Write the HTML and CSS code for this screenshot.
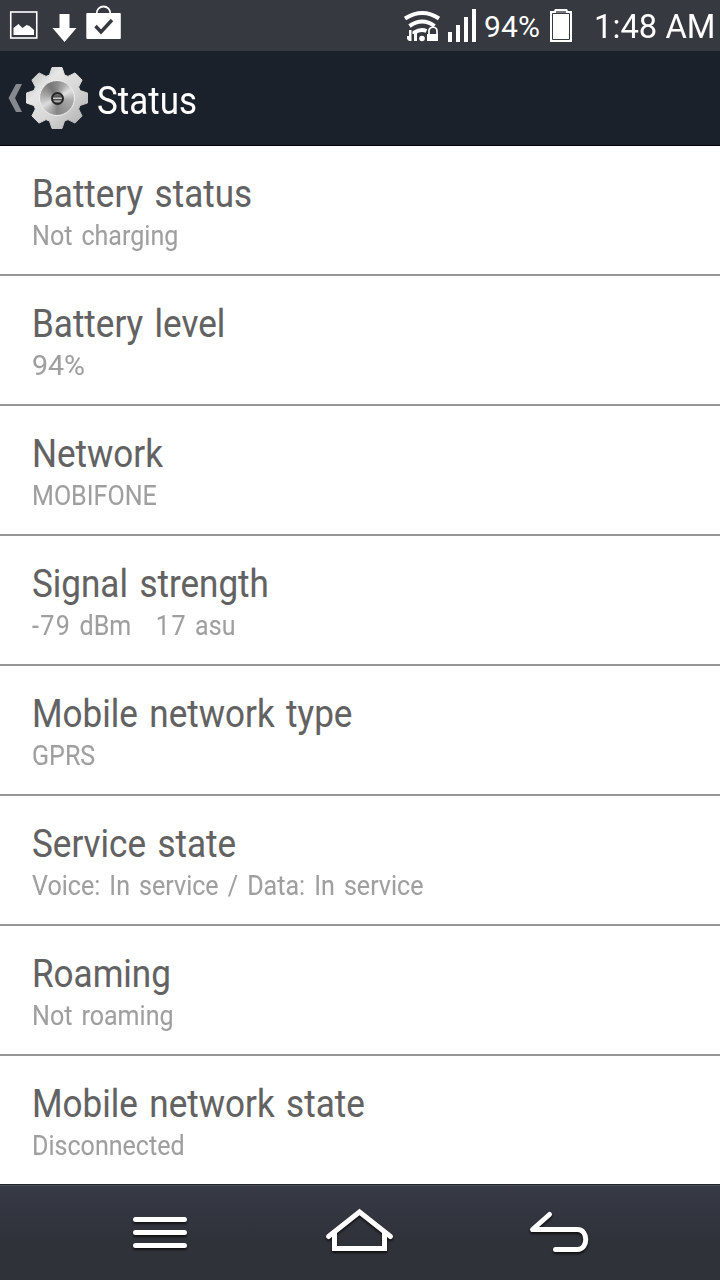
FILE: index.html
```html
<!DOCTYPE html>
<html lang="en">
<head>
    <meta charset="UTF-8">
    <meta name="viewport" content="width=device-width, initial-scale=1.0">
    <title>Status</title>
    <link rel="stylesheet" href="styles.css">
</head>
<body>
    <div class="statusbar">
        <svg class="notifications" width="122" height="51" viewBox="0 0 122 51">
            <rect x="10.75" y="12" width="26" height="26" fill="none" stroke="#fff" stroke-width="1.6"/>
            <path d="M13.500 35v-7l5-4 4 4 4-3 3 1 4.500 4v5z" fill="#fff"/>
            <path d="M59.500 14h10v14h7L64.500 42 52.500 28h7z" fill="#fff"/>
            <path d="M96.500 14c0-10 14-10 14 0" fill="none" stroke="#fff" stroke-width="1.800"/>
            <rect x="86.300" y="13" width="34.500" height="26" rx="1" fill="#fff"/>
            <path d="M95.500 26l5.500 6 11-12" fill="none" stroke="#373940" stroke-width="3.400"/>
        </svg>
        <div class="indicators">
            <svg width="73" height="51" viewBox="404 0 73 51">
                <g fill="none" stroke="#fff" stroke-width="4">
                    <path d="M405 18.500q17.500-11 34 0"/>
                    <path d="M409.500 26q13-9 25 0"/>
                    <path d="M414.500 34v-1.500q6-4 12-1.500" stroke-width="4"/>
                </g>
                <path d="M409 30h2.500v11h-2.500l-2-2v-3h2zM414 31h3v10h-3z" fill="#fff"/>
                <circle cx="422" cy="38.500" r="2.800" fill="#fff"/>
                <path d="M429 34v-3c0-5 8-5 8 0v3" fill="none" stroke="#fff" stroke-width="1.700"/>
                <path d="M427 34h11v7h-11zM448 32h4v10h-4zM456 25h4v17h-4zM464 17h4v25h-4zM472 9h4v33h-4z" fill="#fff"/>
            </svg>
            <span class="percent">94%</span>
            <svg width="22" height="51" viewBox="550 0 22 51">
                <path d="M550 11h4l1-2h12l1 2h4v31h-22z" fill="#fff"/>
                <path d="M552.500 13.500h17v26h-17z" fill="none" stroke="#373940"/>
                <path d="M556 11h10v2h-10z" fill="#777a80"/>
            </svg>
            <span class="clock">1:48 AM</span>
        </div>
    </div>

    <div class="header">
        <svg class="back" width="18" height="94" viewBox="8 51 18 94">
            <path d="M16 84h6l-7 14 7 14h-6l-7.500-14z" fill="#85888e"/>
        </svg>
        <div class="gear">
            <svg width="62" height="62" viewBox="0 0 62 62">
                <defs>
                    <linearGradient id="metal" x1="0" y1="0" x2="1" y2="1">
                        <stop offset="0" stop-color="#b5b5b5"/>
                        <stop offset=".3" stop-color="#e6e6e6"/>
                        <stop offset=".6" stop-color="#d5d5d5"/>
                        <stop offset="1" stop-color="#aaa"/>
                    </linearGradient>
                </defs>
                <path fill="url(#metal)" stroke="url(#metal)" stroke-linejoin="round" d="M23.500 8 26 .5h10L38.500 8 42 9.400l7-3.500 7.100 7.100-3.500 7 1.400 3.500 7.500 2.500v10L54 38.500 52.600 42l3.500 7-7.100 7.100-7-3.500-3.500 1.400-2.500 7.500H26L23.500 54 20 52.600l-7 3.500L5.900 49l3.500-7L8 38.500.5 36V26L8 23.500 9.400 20l-3.500-7L13 5.900l7 3.500z"/>
            </svg>
            <div class="disc"></div>
            <div class="hub"></div>
        </div>
        <h1>Status</h1>
    </div>

    <div class="list">
        <div class="item">
            <div class="title">Battery status</div>
            <div class="summary">Not charging</div>
        </div>
        <div class="item">
            <div class="title">Battery level</div>
            <div class="summary level">94%</div>
        </div>
        <div class="item">
            <div class="title">Network</div>
            <div class="summary">MOBIFONE</div>
        </div>
        <div class="item">
            <div class="title">Signal strength</div>
            <div class="summary signal"><span class="num">-79</span> dBm &nbsp; <span class="num">17</span> asu</div>
        </div>
        <div class="item">
            <div class="title">Mobile network type</div>
            <div class="summary">GPRS</div>
        </div>
        <div class="item">
            <div class="title">Service state</div>
            <div class="summary">Voice: In service / Data: In service</div>
        </div>
        <div class="item">
            <div class="title">Roaming</div>
            <div class="summary">Not roaming</div>
        </div>
        <div class="item">
            <div class="title">Mobile network state</div>
            <div class="summary">Disconnected</div>
        </div>
    </div>

    <div class="navbar">
        <svg width="720" height="94" viewBox="0 1186 720 94" fill="none" stroke="#fff" stroke-width="5">
            <path d="M135.500 1219.500h49M135.500 1232.500h49M135.500 1245.500h49" stroke-linecap="round"/>
            <path d="M328.500 1236.500l31-24.500 31 24.500" stroke-linecap="round"/>
            <path d="M334.500 1232v16.500h50V1232"/>
            <path d="M549.500 1214.500l-17 15h45c11 0 11 20 0 20h-22" stroke-linecap="round" stroke-linejoin="round"/>
        </svg>
    </div>
</body>
</html>
```

FILE: styles.css
```css
body {
    margin: 0;
    width: 720px;
    height: 1280px;
    display: flex;
    flex-direction: column;
    overflow: hidden;
    background-color: #fff;
    font-family: Roboto, "Noto Sans", sans-serif;
}

svg {
    display: block;
}

.statusbar {
    height: 51px;
    display: flex;
    justify-content: space-between;
    background-color: #373940;
    color: #fff;
}

.indicators {
    display: flex;
    align-items: center;
}

.percent {
    width: 66px;
    margin-left: 7px;
    padding-top: 2px;
    font-size: 30px;
    letter-spacing: 0.2px;
    line-height: 53px;
}

.clock {
    width: 126px;
    margin-left: 22px;
    padding-top: 2px;
    font-size: 34px;
    line-height: 53px;
    white-space: nowrap;
    transform: scaleX(0.965);
    transform-origin: left;
}

.header {
    height: 94px;
    display: flex;
    align-items: center;
    padding-left: 8px;
    background-color: #1b212b;
    border-bottom: 1px solid #05000a;
    color: #fff;
}

.gear {
    display: grid;
    place-items: center;
}

.gear > * {
    grid-area: 1 / 1;
}

.disc {
    width: 34px;
    height: 34px;
    border: 1px solid #eee;
    border-radius: 50%;
    background: conic-gradient(#8a8a8a, #aaa 30deg, #e2e2e2 60deg, #aaa 100deg, #858585 180deg, #b5b5b5 215deg, #ddd 240deg, #aaa 280deg, #777 330deg, #8a8a8a);
}

.hub {
    width: 9px;
    height: 9px;
    border: 2.5px solid #262626;
    border-radius: 50%;
    background: linear-gradient(#777, #555 30%, #ccc 50%, #444 60%, #bbb 80%, #555);
}

h1 {
    margin: 5px 0 0 9px;
    font-size: 38px;
    font-weight: 400;
    transform: scaleX(0.92);
    transform-origin: left;
}

.list {
    flex: 1;
}

.item {
    box-sizing: border-box;
    height: 130px;
    padding: 27px 0 0 32px;
    border-bottom: 2px solid #969696;
    white-space: nowrap;
}

.item:last-child {
    height: 128px;
    border-bottom: none;
}

.title {
    color: #626262;
    font-size: 38px;
    line-height: 44px;
    word-spacing: 3px;
    -webkit-text-stroke: 0.1px #626262;
    transform: translateY(-1px) scaleX(0.922);
    transform-origin: left;
}

.summary {
    color: #9f9f9f;
    font-size: 28px;
    line-height: 38px;
    word-spacing: 3.2px;
    -webkit-text-stroke: 0.1px #9f9f9f;
    transform: scaleX(0.895);
    transform-origin: left;
}

.level {
    transform: scaleX(1.02);
}

.signal {
    word-spacing: 2.2px;
}

.num {
    letter-spacing: 1.6px;
}

.navbar {
    height: 94px;
    border-top: 1px solid #20232a;
    box-shadow: inset 0 1px #494d57;
    padding-top: 1px;
    background: linear-gradient(#373b47, #32353e 35%, #2f3239 60%, #2f3239);
}

.navbar svg {
    filter: drop-shadow(0 2px 1px #111);
}
```
